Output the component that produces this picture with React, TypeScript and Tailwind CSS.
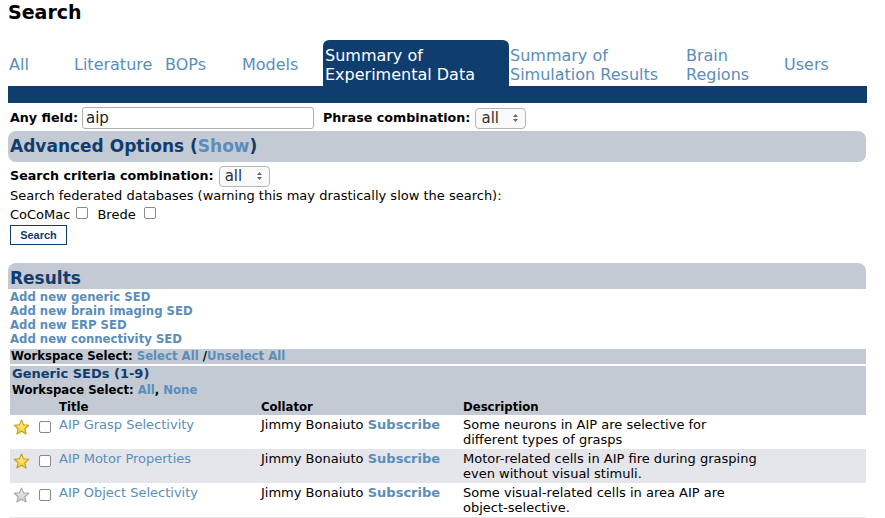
import React from "react";

const DARK = "text-[#0f3d6e]";
const LINK = "text-[#5b8dba]";

function Select() {
  return (
    <span className="inline-flex items-center justify-between w-[51px] h-[21px] border border-[#b5b5b5] rounded-[4px] bg-[#fafafa] pl-[5px] pr-[6px] align-middle">
      <span className="text-[15px] text-[#333] leading-none font-normal">all</span>
      <svg width="7" height="12" viewBox="0 0 7 12">
        <path d="M1 5 L3.5 2 L6 5 Z" fill="#666" />
        <path d="M1 7 L3.5 10 L6 7 Z" fill="#666" />
      </svg>
    </span>
  );
}

function Check() {
  return <span className="block w-[12px] h-[12px] border border-[#8a8a8a] rounded-[2px] bg-white" />;
}

function Star({ on }: { on: boolean }) {
  return (
    <svg width="17" height="16" viewBox="0 0 24 23" className="block">
      <defs>
        <linearGradient id={on ? "gy" : "gg"} x1="0" y1="0" x2="0" y2="1">
          <stop offset="0" stopColor={on ? "#fff6a8" : "#f4f4f4"} />
          <stop offset="1" stopColor={on ? "#f1c92a" : "#c8c8c8"} />
        </linearGradient>
      </defs>
      <polygon
        points="12,1.5 15,8.5 22.5,9 16.8,14 18.6,21.5 12,17.5 5.4,21.5 7.2,14 1.5,9 9,8.5"
        fill={`url(#${on ? "gy" : "gg"})`}
        stroke={on ? "#c9a012" : "#a9a9a9"}
        strokeWidth="1.6"
        strokeLinejoin="round"
      />
    </svg>
  );
}

const rows = [
  { on: true, title: "AIP Grasp Selectivity", d1: "Some neurons in AIP are selective for", d2: "different types of grasps", bg: "bg-white" },
  { on: true, title: "AIP Motor Properties", d1: "Motor-related cells in AIP fire during grasping", d2: "even without visual stimuli.", bg: "bg-[#e4e6eb]" },
  { on: false, title: "AIP Object Selectivity", d1: "Some visual-related cells in area AIP are", d2: "object-selective.", bg: "bg-white" },
];

export default function App() {
  return (
    <div className="w-[885px] h-[518px] overflow-hidden bg-white text-black px-[8px]" style={{ fontFamily: "'DejaVu Sans', Verdana, sans-serif" }}>
      <h1 className="text-[19px] font-bold leading-[24px] h-[40px]">Search</h1>

      {/* Tabs */}
      <div className="w-[859px]">
        <div className="flex items-end h-[46px] text-[16px] leading-[19px]">
          <div className={`w-[66px] pl-[1px] self-center pt-[3px] ${LINK}`}>All</div>
          <div className={`w-[91px] self-center pt-[3px] ${LINK}`}>Literature</div>
          <div className={`w-[77px] self-center pt-[3px] ${LINK}`}>BOPs</div>
          <div className={`w-[81px] self-center pt-[3px] ${LINK}`}>Models</div>
          <div className="w-[186px] h-[46px] bg-[#0f3d6e] text-white rounded-t-[6px] pl-[2px] pt-[6px]">
            <div>Summary of</div>
            <div>Experimental Data</div>
          </div>
          <div className={`w-[177px] self-center pt-[3px] pl-[1px] ${LINK}`}>
            <div>Summary of</div>
            <div>Simulation Results</div>
          </div>
          <div className={`w-[98px] self-center pt-[3px] ${LINK}`}>
            <div>Brain</div>
            <div>Regions</div>
          </div>
          <div className={`w-[83px] self-center pt-[3px] ${LINK}`}>Users</div>
        </div>
        <div className="h-[17px] bg-[#0f3d6e]" />
      </div>

      {/* Any field */}
      <div className="flex items-center h-[28px] pl-[2px] pt-[2px] text-[12.7px]">
        <span className="font-bold w-[72px]">Any field:</span>
        <span className="w-[232px] h-[22px] border border-[#b0b0b0] rounded-[3px] flex items-center pl-[3px] text-[15px] text-[#222]">aip</span>
        <span className="font-bold ml-[9px] mr-[5px]">Phrase combination:</span>
        <Select />
      </div>

      {/* Advanced options */}
      <div className="w-[858px] h-[31px] bg-[#c4cad4] rounded-[8px] flex items-center pl-[2px] pt-[1px] text-[17px] font-bold">
        <span className={DARK}>Advanced Options (</span>
        <span className={LINK}>Show</span>
        <span className={DARK}>)</span>
      </div>

      <div className="pl-[2px] text-[13px]">
        <div className="flex items-center h-[24px] pt-[4px]">
          <span className="font-bold mr-[5px] text-[12.7px]">Search criteria combination:</span>
          <Select />
        </div>
        <div className="h-[20px] leading-[20px]">Search federated databases (warning this may drastically slow the search):</div>
        <div className="flex items-center h-[18px]">
          <span>CoCoMac</span>
          <span className="ml-[6px] mr-[9px] -mt-[4px]"><Check /></span>
          <span>Brede</span>
          <span className="ml-[8px] -mt-[4px]"><Check /></span>
        </div>
        <div className="mt-[1px]">
          <span className={`inline-flex items-center justify-center w-[57px] h-[20px] border border-[#0f3d6e] text-[11px] font-bold ${DARK}`} style={{ fontFamily: "'Liberation Sans', Arial, sans-serif" }}>Search</span>
        </div>
      </div>

      {/* Results */}
      <div className="mt-[18px] w-[858px] h-[26px] bg-[#c4cad4] rounded-t-[8px] flex items-center pl-[2px] pt-[4px] text-[17px] font-bold">
        <span className={DARK}>Results</span>
      </div>
      <div className={`pl-[2px] pt-[1px] text-[11.7px] font-bold leading-[14px] ${LINK}`}>
        <div>Add new generic SED</div>
        <div>Add new brain imaging SED</div>
        <div>Add new ERP SED</div>
        <div>Add new connectivity SED</div>
      </div>
      <div className="ml-[2px] mt-[3px] w-[856px] h-[15px] bg-[#c4cad4] flex items-center pl-[1px] text-[11.7px] font-bold">
        <span>Workspace Select:&nbsp;</span>
        <span className={LINK}>Select All</span>
        <span>&nbsp;/</span>
        <span className={LINK}>Unselect All</span>
      </div>
      <div className="ml-[2px] mt-[2px] w-[856px] bg-[#c4cad4] text-[11.7px] font-bold">
        <div className={`h-[15px] pl-[2px] flex items-center text-[13px] ${DARK}`}>Generic SEDs (1-9)</div>
        <div className="h-[19px] pl-[2px] flex items-center">
          <span>Workspace Select:&nbsp;</span>
          <span className={LINK}>All</span>
          <span>,&nbsp;</span>
          <span className={LINK}>None</span>
        </div>
        <div className="h-[15px] flex items-center">
          <span className="w-[251px] pl-[49px]">Title</span>
          <span className="w-[202px]">Collator</span>
          <span>Description</span>
        </div>
      </div>
      <div className="ml-[2px] w-[856px] text-[13px]">
        {rows.map((r, i) => (
          <div key={i} className={`h-[34px] flex items-start ${r.bg}`}>
            <span className="w-[29px] pl-[3px] pt-[4px]"><Star on={r.on} /></span>
            <span className="w-[20px] pt-[6px]"><Check /></span>
            <span className={`w-[202px] pt-[2px] leading-[15px] ${LINK}`}>{r.title}</span>
            <span className="w-[202px] pt-[2px] leading-[15px]">
              Jimmy Bonaiuto <span className={`font-bold ${LINK}`}>Subscribe</span>
            </span>
            <span className="pt-[2px] leading-[15px]">
              <div>{r.d1}</div>
              <div>{r.d2}</div>
            </span>
          </div>
        ))}
        <div className="h-[1px] bg-[#e4e6eb]" />
      </div>
    </div>
  );
}
